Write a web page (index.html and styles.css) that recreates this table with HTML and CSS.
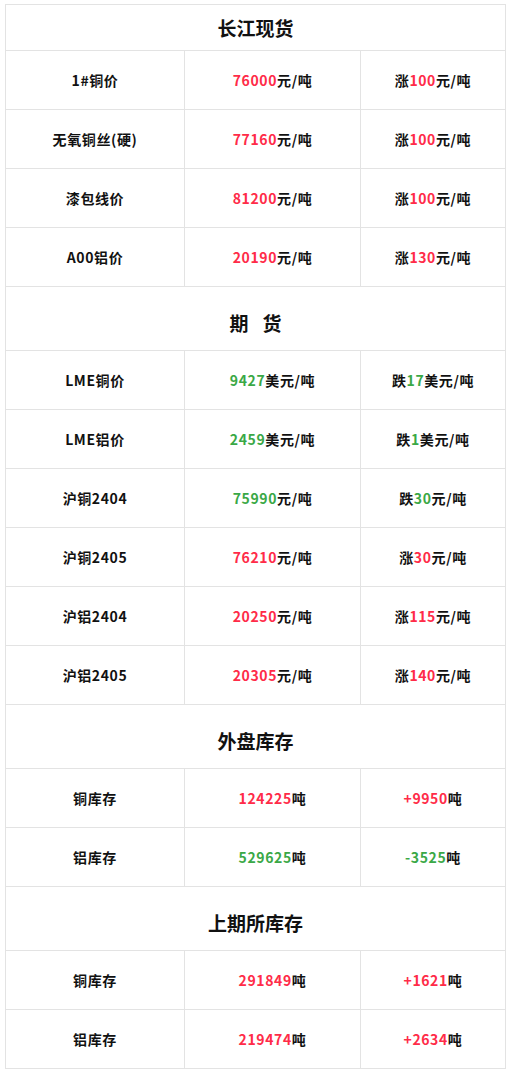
FILE: index.html
```html
<!DOCTYPE html>
<html lang="zh">
<head>
<meta charset="utf-8">
<link rel="stylesheet" href="styles.css">
</head>
<body>
<div class="wrap">
<table class="quotes">
  <colgroup><col class="c1"><col class="c2"><col class="c3"></colgroup>
  <tr class="head first"><th colspan="3">长江现货</th></tr>
  <tr><td>1#铜价</td><td><span class="up">76000</span>元/吨</td><td>涨<span class="up">100</span>元/吨</td></tr>
  <tr><td>无氧铜丝(硬)</td><td><span class="up">77160</span>元/吨</td><td>涨<span class="up">100</span>元/吨</td></tr>
  <tr><td>漆包线价</td><td><span class="up">81200</span>元/吨</td><td>涨<span class="up">100</span>元/吨</td></tr>
  <tr><td>A00铝价</td><td><span class="up">20190</span>元/吨</td><td>涨<span class="up">130</span>元/吨</td></tr>
  <tr class="head"><th colspan="3">期<span class="gap"></span>货</th></tr>
  <tr><td>LME铜价</td><td><span class="down">9427</span>美元/吨</td><td>跌<span class="down">17</span>美元/吨</td></tr>
  <tr><td>LME铝价</td><td><span class="down">2459</span>美元/吨</td><td>跌<span class="down">1</span>美元/吨</td></tr>
  <tr><td>沪铜2404</td><td><span class="down">75990</span>元/吨</td><td>跌<span class="down">30</span>元/吨</td></tr>
  <tr><td>沪铜2405</td><td><span class="up">76210</span>元/吨</td><td>涨<span class="up">30</span>元/吨</td></tr>
  <tr><td>沪铝2404</td><td><span class="up">20250</span>元/吨</td><td>涨<span class="up">115</span>元/吨</td></tr>
  <tr><td>沪铝2405</td><td><span class="up">20305</span>元/吨</td><td>涨<span class="up">140</span>元/吨</td></tr>
  <tr class="head"><th colspan="3">外盘库存</th></tr>
  <tr><td>铜库存</td><td><span class="up">124225</span>吨</td><td><span class="up">+9950</span>吨</td></tr>
  <tr><td>铝库存</td><td><span class="down">529625</span>吨</td><td><span class="down">-3525</span>吨</td></tr>
  <tr class="head"><th colspan="3">上期所库存</th></tr>
  <tr><td>铜库存</td><td><span class="up">291849</span>吨</td><td><span class="up">+1621</span>吨</td></tr>
  <tr><td>铝库存</td><td><span class="up">219474</span>吨</td><td><span class="up">+2634</span>吨</td></tr>
</table>
</div>
</body>
</html>
```
FILE: styles.css
```css
html, body {
  margin: 0;
  padding: 0;
  background: #fff;
}
.wrap {
  padding: 4px 5px;
}
.quotes {
  width: 500px;
  border-collapse: collapse;
  table-layout: fixed;
  font-family: "Noto Sans CJK SC", "Noto Sans", sans-serif;
  color: #111;
}
.c1 { width: 179px; }
.c2 { width: 176px; }
.c3 { width: 145px; }
.quotes td, .quotes th {
  border: 1px solid #e3e3e3;
  text-align: center;
  padding: 0;
}
.quotes td {
  height: 58px;
  font-size: 14px;
  font-weight: 700;
  letter-spacing: 0.6px;
}
.quotes th {
  height: 55px;
  padding-top: 8px;
  font-size: 19px;
  font-weight: 700;
}
.quotes .first th {
  height: 45px;
  padding-top: 0;
}
.gap {
  display: inline-block;
  width: 14px;
}
.up { color: #ff2b48; }
.down { color: #3aa846; }
```
